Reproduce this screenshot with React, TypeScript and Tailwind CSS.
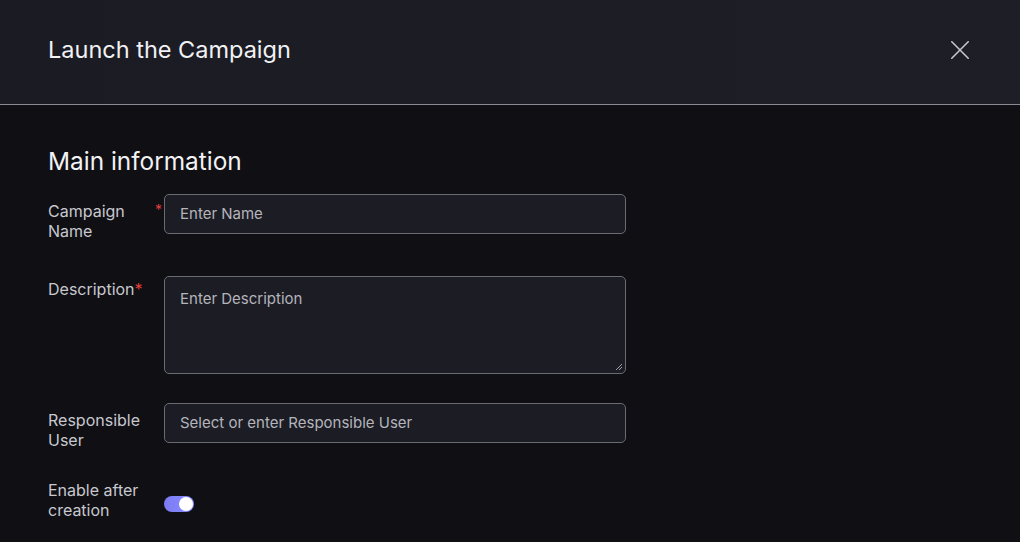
import React from "react";

export default function App() {
  return (
    <div
      className="w-[1020px] h-[542px] overflow-hidden bg-[#0f0f14] text-white"
      style={{ fontFamily: "Inter, 'Noto Sans', sans-serif" }}
    >
      <div className="h-[105px] bg-gradient-to-r from-[#1b1b24] to-[#1e1e26] border-b border-[#8a8a94] flex items-center justify-between pl-[48px] pr-[51px]">
        <h1 className="text-[23.5px] leading-[28px] font-normal text-[#f2f2f4] mt-[-5px]">
          Launch the Campaign
        </h1>
        <svg width="18" height="18" viewBox="0 0 18 18" className="mt-[-5px]">
          <path d="M0.8 0.8 L17.2 17.2 M17.2 0.8 L0.8 17.2" stroke="#c4c4cc" strokeWidth="1.6" strokeLinecap="round" />
        </svg>
      </div>
      <div className="pl-[48px] pt-[42px]">
        <h2 className="text-[24.4px] leading-[28px] text-[#f2f2f4] font-normal">Main information</h2>
        <div className="mt-[19px] flex flex-col">
          <div className="flex h-[40px]">
            <div className="w-[116px] relative pt-[7px] text-[16px] leading-[20px] text-[#c8c8ce]">
              <div>Campaign</div>
              <div>Name</div>
              <span className="absolute right-[2px] top-[9px] text-[#e0403e] text-[14px] leading-[14px]">*</span>
            </div>
            <div className="w-[462px] h-[40px] rounded-[5px] border border-[#6a6a72] bg-[#1c1c24] flex items-center px-[15px] pt-[1px] text-[15px] text-[#b4b4bb]">
              Enter Name
            </div>
          </div>
          <div className="flex h-[98px] mt-[42px]">
            <div className="w-[116px] pt-[3px] text-[16px] leading-[20px] text-[#c8c8ce]">
              Description<span className="text-[#e0403e]">*</span>
            </div>
            <div className="relative w-[462px] h-[98px] rounded-[5px] border border-[#6a6a72] bg-[#1c1c24] px-[15px] pt-[12px] text-[15px] leading-[20px] text-[#b4b4bb]">
              Enter Description
              <svg width="8" height="8" viewBox="0 0 8 8" className="absolute right-[2px] bottom-[2px]">
                <path d="M1 7 L7 1 M4 7 L7 4" stroke="#a0a0a8" strokeWidth="1" />
              </svg>
            </div>
          </div>
          <div className="flex h-[40px] mt-[29px]">
            <div className="w-[116px] pt-[7px] text-[16px] leading-[20px] text-[#c8c8ce]">
              <div>Responsible</div>
              <div>User</div>
            </div>
            <div className="w-[462px] h-[40px] rounded-[5px] border border-[#6a6a72] bg-[#1c1c24] flex items-center px-[15px] pt-[1px] text-[15px] text-[#b4b4bb]">
              Select or enter Responsible User
            </div>
          </div>
          <div className="flex h-[40px] mt-[37px]">
            <div className="w-[116px] text-[16px] leading-[20px] text-[#c8c8ce]">
              <div>Enable after</div>
              <div>creation</div>
            </div>
            <div className="pt-[16px]">
              <div className="w-[30px] h-[16px] rounded-full bg-gradient-to-r from-[#7b7cf4] to-[#8b8cff] flex items-center justify-end pr-[1px]">
                <div className="w-[14px] h-[14px] rounded-full bg-white" />
              </div>
            </div>
          </div>
        </div>
      </div>
    </div>
  );
}
